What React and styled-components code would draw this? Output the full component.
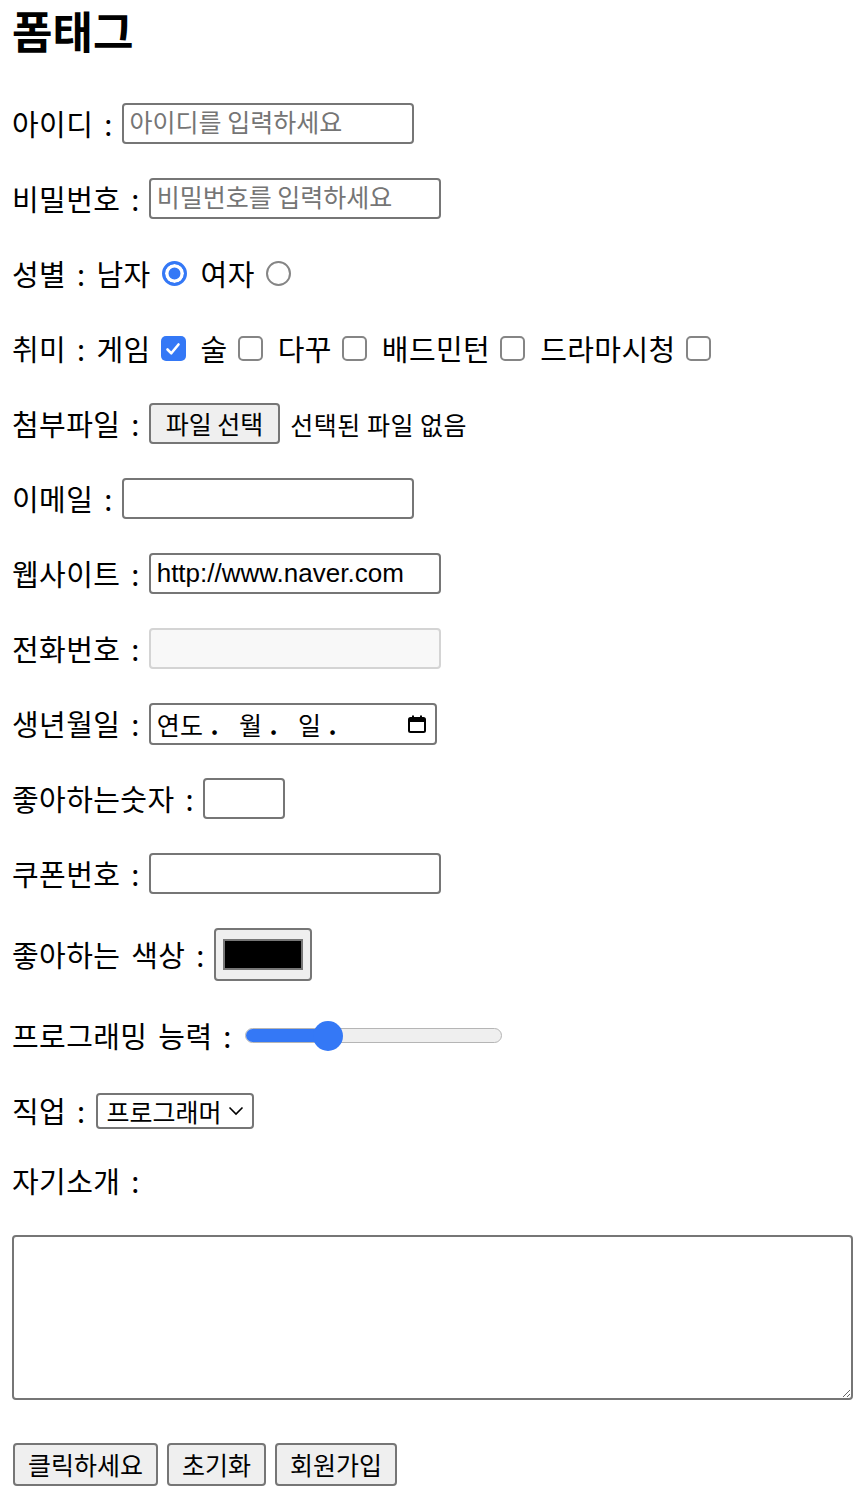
import React from "react";
import styled, { createGlobalStyle } from "styled-components";

const GlobalStyle = createGlobalStyle`
  body {
    margin: 0;
    background: #fff;
    color: #000;
    font-family: "Noto Sans CJK KR", "Noto Sans", sans-serif;
  }
`;

const Page = styled.div`
  padding: 0 11px 0 12px;
`;

const Title = styled.h1`
  margin: 0;
  font-size: 44px;
  line-height: 60px;
  font-weight: 700;
`;

const Form = styled.form`
  display: flex;
  flex-direction: column;
  gap: 28px;
  margin-top: 40px;
`;

const Row = styled.div`
  display: flex;
  align-items: center;
  min-height: ${(p) => p.$h || 47}px;
  font-size: 29px;
  line-height: 1.2;
  letter-spacing: 0.4px;
  word-spacing: 4px;
  white-space: pre;
`;

const Label = styled.span`
  margin-right: ${(p) => (p.$gap !== undefined ? p.$gap : 9)}px;
`;

const TextInput = styled.input`
  box-sizing: border-box;
  width: ${(p) => p.$w || 292}px;
  height: 41px;
  margin: 0;
  padding: 0 6px;
  border: 2px solid #767676;
  border-radius: 4px;
  background: #fff;
  font-family: "Liberation Sans", "Noto Sans CJK KR", sans-serif;
  font-size: 26px;
  color: #000;
  outline: none;

  &::placeholder {
    color: #757575;
    font-family: "Noto Sans CJK KR", sans-serif;
    font-size: 25px;
  }

  &:disabled {
    background: #f8f8f8;
    border-color: #d4d4d4;
  }
`;

const Radio = styled.span`
  box-sizing: border-box;
  display: inline-block;
  width: 25px;
  height: 25px;
  border-radius: 50%;
  margin: 0 14px 0 11px;
  border: ${(p) => (p.$on ? "3px solid #3478f6" : "2px solid #858585")};
  background: ${(p) => (p.$on ? "#3478f6" : "#fff")};
  box-shadow: ${(p) => (p.$on ? "inset 0 0 0 3.5px #fff" : "none")};
`;

const Check = styled.span`
  box-sizing: border-box;
  display: inline-flex;
  align-items: center;
  justify-content: center;
  width: 25px;
  height: 25px;
  border-radius: 5px;
  margin: 0 15px 0 10px;
  border: ${(p) => (p.$on ? "none" : "2px solid #858585")};
  background: ${(p) => (p.$on ? "#3478f6" : "#fff")};
`;

const GrayButton = styled.button`
  box-sizing: border-box;
  height: ${(p) => p.$h || 43}px;
  margin: 0;
  padding: 0 ${(p) => p.$pad || 13}px;
  border: 2px solid #767676;
  border-radius: 4px;
  background: #efefef;
  color: #000;
  font-family: "Noto Sans CJK KR", sans-serif;
  font-size: 25px;
  line-height: 1;
  white-space: nowrap;
`;

const FileNote = styled.span`
  margin-left: 10px;
  font-size: 25px;
  letter-spacing: 0.5px;
  word-spacing: 0;
`;

const DateBox = styled.div`
  box-sizing: border-box;
  display: flex;
  align-items: center;
  width: 288px;
  height: 42px;
  padding: 0 8px 0 6px;
  border: 2px solid #767676;
  border-radius: 4px;
  font-size: 25px;
`;

const Dot = styled.span`
  margin: 0 20px 0 7px;
  font-weight: 700;
`;

const CalIcon = styled.svg`
  margin-left: auto;
`;

const ColorWell = styled.div`
  box-sizing: border-box;
  width: 98px;
  height: 53px;
  padding: 9px 7px;
  border: 2px solid #767676;
  border-radius: 4px;
  background: #efefef;
`;

const Swatch = styled.div`
  box-sizing: border-box;
  height: 100%;
  border: 2px solid #777;
  background: #000;
`;

const Slider = styled.div`
  position: relative;
  display: flex;
  align-items: center;
  width: 257px;
  height: 32px;
  margin-left: 4px;
`;

const Track = styled.div`
  box-sizing: border-box;
  width: 100%;
  height: 15px;
  border: 1.5px solid #b5b5b5;
  border-radius: 8px;
  background: #efefef;
  overflow: hidden;
`;

const Fill = styled.div`
  height: 100%;
  background: #3478f6;
`;

const Thumb = styled.div`
  position: absolute;
  top: 1px;
  width: 30px;
  height: 30px;
  margin-left: -15px;
  border-radius: 50%;
  background: #3478f6;
`;

const SelectBox = styled.div`
  box-sizing: border-box;
  display: flex;
  align-items: center;
  width: 158px;
  height: 36px;
  padding: 0 8px 0 9px;
  border: 2px solid #767676;
  border-radius: 4px;
  font-size: 25px;
  letter-spacing: 0;
`;

const Chevron = styled.svg`
  margin-left: auto;
`;

const Intro = styled.textarea`
  box-sizing: border-box;
  display: block;
  width: 841px;
  height: 165px;
  margin: 37px 0 0;
  border: 2px solid #767676;
  border-radius: 4px;
  font-size: 24px;
  outline: none;
`;

const Buttons = styled.div`
  display: flex;
  gap: 9px;
  margin: 43px 0 0 1px;
`;

const hobbies = [
  { name: "게임", on: true },
  { name: "술" },
  { name: "다꾸" },
  { name: "배드민턴" },
  { name: "드라마시청" },
];

function CheckMark() {
  return (
    <svg width="16" height="16" viewBox="0 0 16 16">
      <path d="M2.5 8.5 L6.3 12.3 L13.5 3.5" fill="none" stroke="#fff" strokeWidth="2.6" strokeLinecap="round" strokeLinejoin="round" />
    </svg>
  );
}

function App() {
  const skill = 0.3;
  return (
    <Page>
      <GlobalStyle />
      <Title>폼태그</Title>
      <Form onSubmit={(e) => e.preventDefault()}>
        <Row>
          <Label>아이디 :</Label>
          <TextInput placeholder="아이디를 입력하세요" />
        </Row>
        <Row>
          <Label>비밀번호 :</Label>
          <TextInput type="password" placeholder="비밀번호를 입력하세요" />
        </Row>
        <Row>
          <span>성별 : 남자</span>
          <Radio $on />
          <span>여자</span>
          <Radio />
        </Row>
        <Row>
          <span>취미 : </span>
          {hobbies.map((h) => (
            <React.Fragment key={h.name}>
              <span>{h.name}</span>
              <Check $on={h.on}>{h.on && <CheckMark />}</Check>
            </React.Fragment>
          ))}
        </Row>
        <Row>
          <Label>첨부파일 :</Label>
          <GrayButton type="button" $h={41} $pad={15}>파일 선택</GrayButton>
          <FileNote>선택된 파일 없음</FileNote>
        </Row>
        <Row>
          <Label>이메일 :</Label>
          <TextInput type="email" />
        </Row>
        <Row>
          <Label>웹사이트 :</Label>
          <TextInput defaultValue="http://www.naver.com" />
        </Row>
        <Row>
          <Label>전화번호 :</Label>
          <TextInput disabled />
        </Row>
        <Row>
          <Label>생년월일 :</Label>
          <DateBox>
            <span>연도</span>
            <Dot>.</Dot>
            <span>월</span>
            <Dot>.</Dot>
            <span>일</span>
            <Dot>.</Dot>
            <CalIcon width="20" height="20" viewBox="0 0 20 20">
              <rect x="2" y="4" width="16" height="14" rx="1.5" fill="none" stroke="#000" strokeWidth="2" />
              <rect x="2" y="4" width="16" height="4" fill="#000" />
              <rect x="5" y="1.5" width="2" height="4" fill="#000" />
              <rect x="13" y="1.5" width="2" height="4" fill="#000" />
            </CalIcon>
          </DateBox>
        </Row>
        <Row>
          <Label>좋아하는숫자 :</Label>
          <TextInput type="number" $w={82} />
        </Row>
        <Row>
          <Label>쿠폰번호 :</Label>
          <TextInput />
        </Row>
        <Row $h={59}>
          <Label>좋아하는 색상 :</Label>
          <ColorWell>
            <Swatch />
          </ColorWell>
        </Row>
        <Row>
          <Label>프로그래밍 능력 :</Label>
          <Slider>
            <Track>
              <Fill style={{ width: `${15 + 227 * skill}px` }} />
            </Track>
            <Thumb style={{ left: `${15 + 227 * skill}px` }} />
          </Slider>
        </Row>
        <Row>
          <Label $gap={10}>직업 :</Label>
          <SelectBox>
            프로그래머
            <Chevron width="16" height="10" viewBox="0 0 16 10">
              <path d="M1.5 1.5 L8 8 L14.5 1.5" fill="none" stroke="#000" strokeWidth="1.6" />
            </Chevron>
          </SelectBox>
        </Row>
        <Row $h={36}>
          <Label>자기소개 :</Label>
        </Row>
      </Form>
      <Intro />
      <Buttons>
        <GrayButton type="button">클릭하세요</GrayButton>
        <GrayButton type="reset">초기화</GrayButton>
        <GrayButton type="submit">회원가입</GrayButton>
      </Buttons>
    </Page>
  );
}

export default App;
